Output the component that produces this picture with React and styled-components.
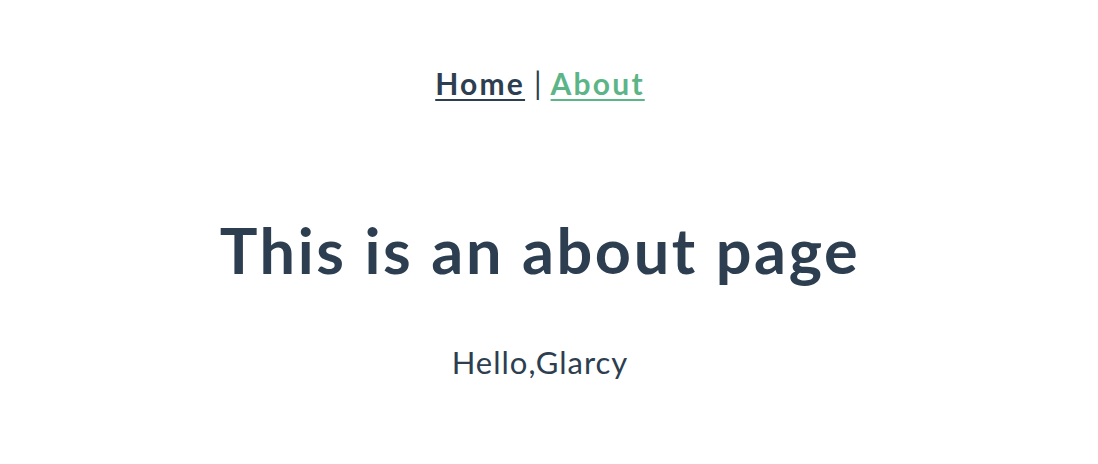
import React from 'react';
import styled, { createGlobalStyle } from 'styled-components';

const GlobalStyle = createGlobalStyle`
  html, body {
    margin: 0;
    padding: 0;
    background: #ffffff;
  }
`;

const AppWrap = styled.div`
  font-family: Lato, 'Noto Sans', sans-serif;
  -webkit-font-smoothing: antialiased;
  text-align: center;
  color: #2c3e50;
  display: flex;
  flex-direction: column;
  align-items: center;
  padding-right: 18px;
`;

const Nav = styled.nav`
  padding: 65px 0 0;
  font-size: 30px;
  line-height: 36px;
  display: flex;
  align-items: baseline;
  gap: 9px;
`;

const NavLink = styled.a`
  font-weight: bold;
  letter-spacing: 2.2px;
  color: ${(props) => (props.active ? '#5cb587' : '#2c3e50')};
  text-decoration: underline;
  text-decoration-thickness: 2px;
  text-underline-offset: 4px;
  cursor: pointer;
`;

const Divider = styled.span`
  font-weight: normal;
  color: #2c3e50;
`;

const Title = styled.h1`
  margin: 111px 0 0;
  font-size: 63px;
  line-height: 76px;
  font-weight: bold;
  letter-spacing: 2.6px;
`;

const Greeting = styled.p`
  margin: 56px 0 0;
  font-size: 31px;
  line-height: 37px;
  font-weight: normal;
  letter-spacing: 1px;
`;

const App = () => (
  <>
    <GlobalStyle />
    <AppWrap>
      <Nav>
        <NavLink>Home</NavLink>
        <Divider>|</Divider>
        <NavLink active>About</NavLink>
      </Nav>
      <Title>This is an about page</Title>
      <Greeting>Hello,Glarcy</Greeting>
    </AppWrap>
  </>
);

export default App;
